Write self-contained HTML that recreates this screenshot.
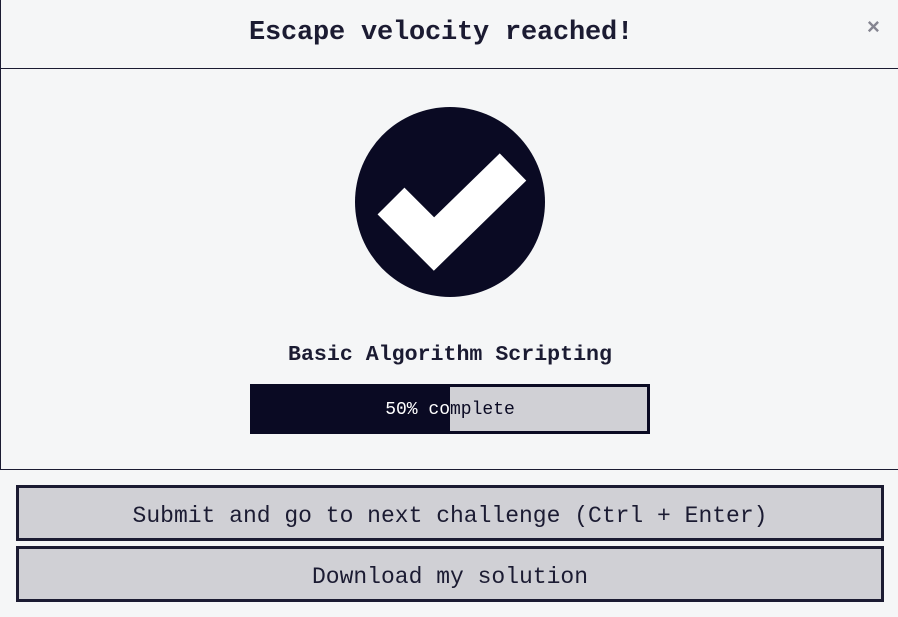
<!DOCTYPE html>
<html><head><style>
html,body{margin:0;padding:0;width:898px;height:617px;background:#f5f6f7;overflow:hidden;font-family:"Liberation Mono","DejaVu Sans Mono",monospace;color:#1b1b32}
.hdr{position:absolute;left:0;top:0;width:898px;height:68px;border-bottom:1px solid #1b1b32}
.title{position:absolute;left:0;width:882px;top:18px;text-align:center;font-size:27px;font-weight:bold;color:#1b1b32;letter-spacing:-0.2px}
.x{position:absolute;left:867px;top:14px;font-size:22px;color:#858591;font-weight:bold;font-family:"Liberation Sans",sans-serif}
.vl{position:absolute;left:0;top:0;width:1px;height:469px;background:#1b1b32}
.name{position:absolute;left:0;width:900px;top:343px;text-align:center;font-size:21.6px;font-weight:bold}
.bar{position:absolute;left:250px;top:384px;width:394px;height:44px;border:3px solid #0a0a23;background:#d0d0d5}
.bar .t{position:absolute;left:0;top:1px;width:394px;height:44px;line-height:44px;text-align:center;font-size:18px;color:#0a0a23}
.bar .f{position:absolute;left:0;top:0;width:197px;height:44px;background:#0a0a23;overflow:hidden}
.bar .f .t{color:#fff}
.fl{position:absolute;left:0;top:469px;width:898px;height:1px;background:#1b1b32}
.btn{position:absolute;left:16px;width:862px;height:50px;border:3px solid #1b1b32;background:#d0d0d5;text-align:center;line-height:56px;font-size:23px;color:#1b1b32}
</style></head><body>
<div class="hdr"></div>
<div class="vl"></div>
<div class="title">Escape velocity reached!</div>
<div class="x">×</div>
<svg style="position:absolute;left:355px;top:107px" width="190" height="190" viewBox="0 0 190 190">
<circle cx="95" cy="95" r="95" fill="#0a0a23"/>
<path d="M36 94 L79 137 L158 60" stroke="#fff" stroke-width="38" fill="none" stroke-linecap="butt" stroke-linejoin="miter"/>
</svg>
<div class="name">Basic Algorithm Scripting</div>
<div class="bar"><div class="t">50% complete</div><div class="f"><div class="t">50% complete</div></div></div>
<div class="fl"></div>
<div class="btn" style="top:485px">Submit and go to next challenge (Ctrl + Enter)</div>
<div class="btn" style="top:546px">Download my solution</div>
</body></html>
